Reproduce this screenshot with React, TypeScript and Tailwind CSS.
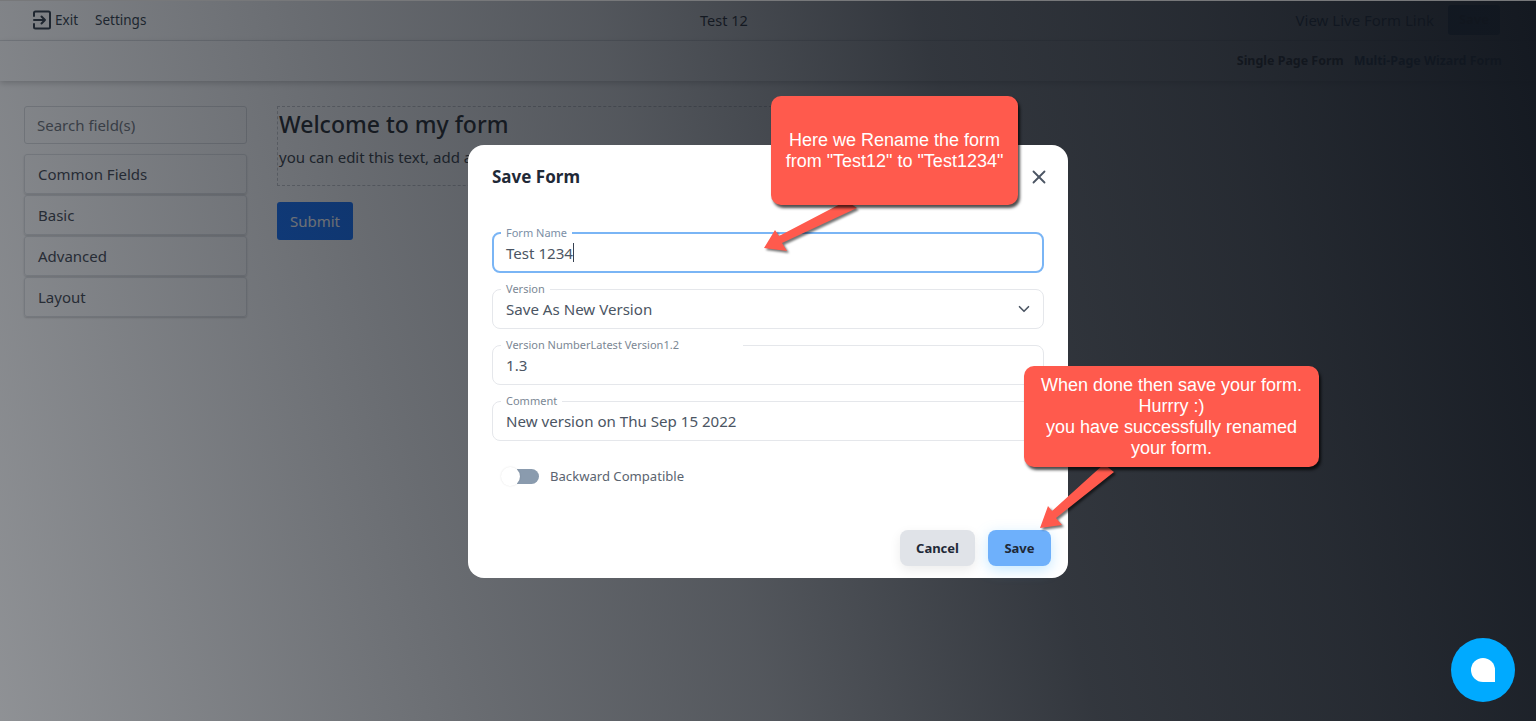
import { ChevronDown, X } from "lucide-react";

const font = "font-['Noto_Sans',sans-serif]";

function Field({ label, value, focused, chevron, caret, legendClass }: { label: string; value: string; focused?: boolean; chevron?: boolean; caret?: boolean; legendClass?: string }) {
  return (
    <fieldset className={`h-[46px] rounded-lg ${focused ? "border-2 border-[#7ab5f5]" : "border border-[#e5e7eb]"} relative flex`}>
      <legend className={`${focused ? "ml-[7px]" : "ml-[8px]"} px-[5px] text-[11px] leading-[12px] ${focused ? "text-[#7c8fa6]" : "text-[#7b8794]"} ${legendClass ?? ""}`}>{label}</legend>
      <div className={`flex w-full items-center justify-between ${focused ? "pl-[12px] pr-[9px]" : "pl-[13px] pr-[10px]"} h-[39px] -mt-[5.5px] text-[15.1px] text-[#4b5563]`}>
        <span className="flex items-center">
          {value}
          {caret && <span className="inline-block h-[19px] w-px bg-[#374151]" />}
        </span>
        {chevron && <ChevronDown size={18} strokeWidth={2.2} className="text-[#4b5563]" />}
      </div>
    </fieldset>
  );
}

function Accordion({ label, className }: { label: string; className: string }) {
  return (
    <div className={`flex items-center rounded-[3px] border border-[#dfe1e4] pl-[13px] text-[15px] text-[#3f4650] shadow-[0_1px_2px_rgba(0,0,0,0.18)] ${className}`}>
      {label}
    </div>
  );
}

export default function App() {
  return (
    <div className={`relative h-[721px] w-[1536px] overflow-hidden bg-white ${font}`}>
      <header className="flex h-[41px] items-center justify-between border-b border-[#e2e4e7] pl-[32px] pr-[36px]">
        <div className="flex w-[400px] items-center text-[13.5px] text-[#2e3945]">
          <svg width="20" height="20" viewBox="0 0 20 20" fill="none" stroke="currentColor" strokeWidth="2" strokeLinecap="round" strokeLinejoin="round">
            <path d="M2 6V3a1.5 1.5 0 0 1 1.5-1.5h13A1.5 1.5 0 0 1 18 3v14a1.5 1.5 0 0 1-1.5 1.5h-13A1.5 1.5 0 0 1 2 17v-3" />
            <path d="M2 10h11M9.5 6.5 13 10l-3.5 3.5" />
          </svg>
          <span className="ml-[3px]">Exit</span>
          <span className="ml-[17px]">Settings</span>
        </div>
        <div className="absolute left-[700px] top-[10px] text-[14.5px] text-[#1f2730]">Test 12</div>
        <div className="flex items-center">
          <span className="text-[15px] text-[#0a2a4a]">View Live Form Link</span>
          <span className="ml-[14px] flex h-[30px] w-[52px] items-center justify-center rounded-[3px] bg-[#2a5a8a] text-[13px] font-bold text-[#0f1c2c]">Save</span>
        </div>
      </header>
      <div className="flex h-[40px] items-center justify-end gap-[10px] pr-[34px] text-[12.45px] font-bold shadow-[0_2px_6px_rgba(0,0,0,0.22)]">
        <span className="text-[#222]">Single Page Form</span>
        <span className="text-[#0d3b66]">Multi-Page Wizard Form</span>
      </div>

      <main className="flex pl-[24px] pt-[25px]">
        <aside className="flex w-[223px] flex-col">
          <div className="flex h-[38px] items-center rounded-[3px] border border-[#d9dbde] pl-[12px] text-[15px] text-[#6b7077]">Search field(s)</div>
          <Accordion label="Common Fields" className="mt-[10px] h-[40px]" />
          <Accordion label="Basic" className="mt-[1px] h-[40px]" />
          <Accordion label="Advanced" className="mt-[1px] h-[40px]" />
          <Accordion label="Layout" className="mt-[1px] h-[40px]" />
        </aside>
        <section className="ml-[30px] flex w-[520px] flex-col items-start">
          <div className="h-[80px] w-full border border-dashed border-[#c4c6ca] pl-[1px] text-[#212529]">
            <h1 className="mt-[1px] text-[23px] font-medium leading-[32px]">Welcome to my form</h1>
            <p className="mt-[5px] text-[15px] leading-[24px] text-[#333a42]">you can edit this text, add a description</p>
          </div>
          <button className="mt-[16px] h-[38px] w-[76px] rounded-[3px] bg-[#0d6efd] text-[15px] text-white">Submit</button>
        </section>
      </main>

      <div className="absolute inset-0 bg-[linear-gradient(76deg,rgba(17,22,30,0.47)_0%,rgba(17,22,30,0.63)_28%,rgba(17,22,30,0.72)_45%,rgba(17,22,30,0.86)_64%,rgba(17,22,30,0.91)_80%,rgba(17,22,30,0.95)_90%,rgba(17,22,30,0.99)_100%)]" />
      <div className="absolute inset-x-0 top-0 h-px bg-[#77787a]" />

      <div className="absolute inset-0 flex items-center justify-center pt-[2px]">
        <div className="flex h-[433px] w-[600px] flex-col rounded-2xl bg-white">
          <div className="flex h-[64px] items-center justify-between pl-[24px] pr-[18px]">
            <h2 className="text-[17px] font-bold text-[#1f2937]">Save Form</h2>
            <X size={22} strokeWidth={2} className="text-[#4b5563]" />
          </div>
          <div className="ml-[24px] mr-[24px] mt-[18px] flex flex-col gap-[10px]">
            <Field label="Form Name" value="Test 1234" focused caret />
            <Field label="Version" value="Save As New Version" chevron />
            <Field label="Version NumberLatest Version1.2" value="1.3" legendClass="pr-[64px]" />
            <Field label="Comment" value="New version on Thu Sep 15 2022" />
          </div>
          <div className="ml-[33px] mt-[26px] flex items-center">
            <div className="relative h-[16px] w-[38px]">
              <div className="absolute right-0 top-0 h-[15px] w-[22px] rounded-r-lg bg-[#8a9bae]" />
              <div className="absolute left-0 top-[-2px] h-[19px] w-[19px] rounded-full bg-white shadow-[0_0_2px_rgba(0,0,0,0.12)]" />
            </div>
            <span className="ml-[11px] text-[13.1px] text-[#5b6470]">Backward Compatible</span>
          </div>
          <div className="mt-auto mb-[12px] flex justify-end gap-[13px] pr-[17px] text-[13px] font-bold text-[#1f2937]">
            <button className="h-[36px] w-[75px] rounded-lg bg-[#e0e3e8] pt-[2px] shadow-[0_4px_12px_rgba(0,0,0,0.08)]">Cancel</button>
            <button className="h-[36px] w-[63px] rounded-lg bg-[#6eb0fb] pt-[2px] shadow-[0_4px_14px_rgba(90,190,255,0.35)]">Save</button>
          </div>
        </div>
      </div>

      <svg className="absolute left-0 top-0 drop-shadow-[2px_2px_1px_rgba(0,0,0,0.55)]" width="1536" height="721" viewBox="0 0 1536 721" fill="#ff5a4d">
        <path d="M846 201 857 208 782 243 787 251 764 248 775 230 779 236Z" />
        <path d="M1104 464 1114 472 1056 518 1062 525 1040 528 1048 506 1052 511Z" />
      </svg>

      <div className="absolute left-[771px] top-[96px] flex h-[109px] w-[247px] items-center justify-center rounded-[10px] bg-[#ff5a4d] text-center font-['Liberation_Sans',sans-serif] text-[18px] leading-[21px] text-white shadow-[2px_3px_3px_rgba(0,0,0,0.7)]">
        <p className="mt-[1px]">Here we Rename the form<br />from "Test12" to "Test1234"</p>
      </div>
      <div className="absolute left-[1024px] top-[366px] flex h-[101px] w-[295px] items-center justify-center rounded-[10px] bg-[#ff5a4d] text-center font-['Liberation_Sans',sans-serif] text-[18px] leading-[21px] text-white shadow-[2px_3px_3px_rgba(0,0,0,0.7)]">
        <p>When done then save your form.<br />Hurrry :)<br />you have successfully renamed<br />your form.</p>
      </div>

      <div className="absolute left-[1451px] top-[638px] flex h-[64px] w-[64px] items-center justify-center rounded-full bg-[#00aaff]">
        <div className="h-[24px] w-[24px] rounded-full rounded-br-none bg-white" />
      </div>
    </div>
  );
}
